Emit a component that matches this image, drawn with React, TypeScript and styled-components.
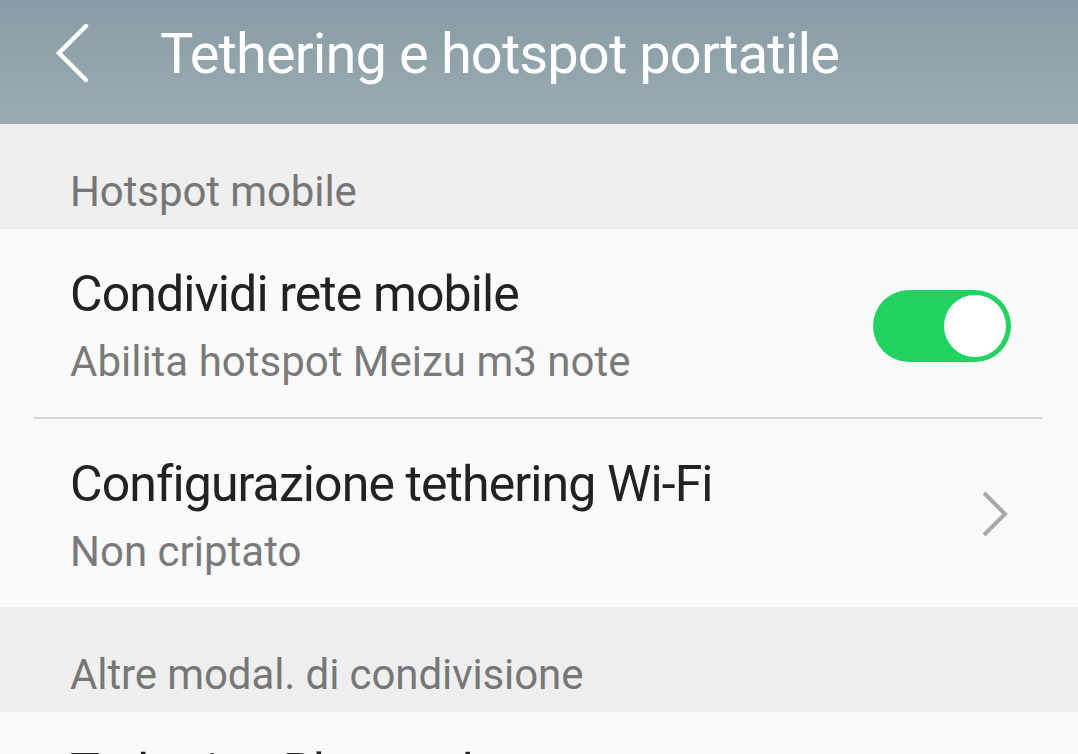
import React from 'react'
import styled, { createGlobalStyle } from 'styled-components'

const GlobalStyle = createGlobalStyle`
  html, body {
    margin: 0;
    padding: 0;
    background: #fafafa;
    font-family: Roboto, 'Noto Sans', sans-serif;
    -webkit-font-smoothing: antialiased;
  }
`

const Page = styled.div`
  width: 1078px;
  height: 754px;
  overflow: hidden;
  display: flex;
  flex-direction: column;
  background: #fafafa;
`

const Header = styled.header`
  flex: 0 0 124px;
  display: flex;
  align-items: center;
  padding: 0 0 16px 55px;
  background: linear-gradient(180deg, #899ba5 0%, #9aadb1 100%);
  box-sizing: border-box;
`

const BackButton = styled.button`
  display: flex;
  align-items: center;
  justify-content: center;
  width: 36px;
  height: 60px;
  margin: 0 69px 0 0;
  padding: 0;
  border: 0;
  background: none;
`

const Title = styled.h1`
  margin: 0;
  font-size: 56px;
  font-weight: 400;
  letter-spacing: -0.9px;
  color: #ffffff;
  line-height: 64px;
`

const SectionLabel = styled.div`
  flex: 0 0 auto;
  height: 105px;
  box-sizing: border-box;
  padding: 43px 0 0 70px;
  background: #efefef;
  font-size: 42px;
  line-height: 50px;
  letter-spacing: -0.1px;
  color: #777777;
`

const Group = styled.div`
  background: #fafafa;
  display: flex;
  flex-direction: column;
`

const Row = styled.div<{ $single?: boolean }>`
  display: flex;
  align-items: center;
  justify-content: space-between;
  box-sizing: border-box;
  padding: ${(p) => (p.$single ? '30px 68px 30px 70px' : '35px 68px 30px 70px')};
`

const TextBlock = styled.div`
  display: flex;
  flex-direction: column;
`

const RowTitle = styled.div`
  font-size: 50px;
  line-height: 60px;
  letter-spacing: -0.9px;
  color: #222222;
`

const RowSubtitle = styled.div`
  margin-top: 13px;
  font-size: 42px;
  line-height: 50px;
  letter-spacing: 0;
  color: #7a7a7a;
`

const Divider = styled.div`
  height: 2px;
  margin: 0 36px 0 33px;
  background: #d6d6d6;
`

const Switch = styled.div<{ $on: boolean }>`
  width: 138px;
  height: 72px;
  border-radius: 36px;
  box-sizing: border-box;
  padding: 5px;
  margin-right: -1px;
  display: flex;
  justify-content: ${(p) => (p.$on ? 'flex-end' : 'flex-start')};
  background: ${(p) => (p.$on ? '#22d262' : '#d8d8d8')};
`

const Knob = styled.div`
  width: 62px;
  height: 62px;
  border-radius: 50%;
  background: #ffffff;
`

const Chevron = styled.div`
  display: flex;
  align-items: center;
  margin: -4px 1px 0 0;
`

const BackIcon = () => (
  <svg width="36" height="60" viewBox="0 0 36 60">
    <polyline
      points="31,2 4,29 31,56"
      fill="none"
      stroke="#ffffff"
      strokeWidth="4.5"
      strokeLinecap="round"
      strokeLinejoin="miter"
    />
  </svg>
)

const ChevronIcon = () => (
  <svg width="28" height="48" viewBox="0 0 28 48">
    <polyline points="3,3 24,24 3,45" fill="none" stroke="#a9a9a9" strokeWidth="4" />
  </svg>
)

export default function App() {
  return (
    <Page>
      <GlobalStyle />
      <Header>
        <BackButton aria-label="Indietro">
          <BackIcon />
        </BackButton>
        <Title>Tethering e hotspot portatile</Title>
      </Header>

      <SectionLabel>Hotspot mobile</SectionLabel>
      <Group>
        <Row>
          <TextBlock>
            <RowTitle>Condividi rete mobile</RowTitle>
            <RowSubtitle>Abilita hotspot Meizu m3 note</RowSubtitle>
          </TextBlock>
          <Switch $on>
            <Knob />
          </Switch>
        </Row>
        <Divider />
        <Row>
          <TextBlock>
            <RowTitle>Configurazione tethering Wi-Fi</RowTitle>
            <RowSubtitle>Non criptato</RowSubtitle>
          </TextBlock>
          <Chevron>
            <ChevronIcon />
          </Chevron>
        </Row>
      </Group>

      <SectionLabel>Altre modal. di condivisione</SectionLabel>
      <Group>
        <Row $single>
          <TextBlock>
            <RowTitle>Tethering Bluetooth</RowTitle>
          </TextBlock>
        </Row>
      </Group>
    </Page>
  )
}
